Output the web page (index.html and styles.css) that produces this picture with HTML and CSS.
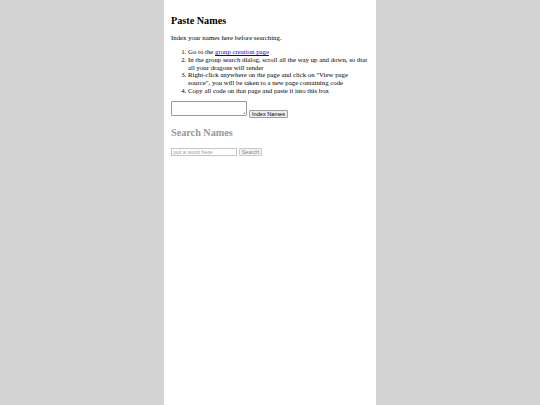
FILE: index.html
```html
<!DOCTYPE html>
<html>
<head>
<meta charset="utf-8">
<title>Paste Names</title>
<link rel="stylesheet" href="styles.css">
</head>
<body>
<div class="page">
  <h2 class="title">Paste Names</h2>
  <p class="intro">Index your names here before searching.</p>
  <ol class="steps">
    <li>Go to the <a href="#" class="link">group creation page</a></li>
    <li>In the group search dialog, scroll all the way up and down, so that all your dragons will render</li>
    <li>Right-click anywhere on the page and click on "View page source", you will be taken to a new page containing code</li>
    <li>Copy all code on that page and paste it into this box</li>
  </ol>
  <div class="index-form">
    <div class="codebox"></div>
    <button class="btn btn-index">Index Names</button>
  </div>
  <h2 class="title title-muted">Search Names</h2>
  <div class="search-form">
    <div class="word-input">put a word here</div>
    <button class="btn btn-search">Search</button>
  </div>
</div>
</body>
</html>
```

FILE: styles.css
```css
html, body {
  margin: 0;
  padding: 0;
  background: #d3d3d3;
}
.page {
  box-sizing: border-box;
  width: 212px;
  min-height: 405px;
  margin: 0 auto;
  padding: 15px 7px 0;
  background: #ffffff;
  font-family: "Liberation Serif", "Times New Roman", serif;
  font-size: 6.8px;
  color: #000;
}
.title {
  margin: 0;
  font-size: 10.2px;
  font-weight: bold;
  line-height: 11.7px;
}
.title-muted {
  color: #999999;
  margin-top: 8.5px;
}
.intro {
  margin: 6.8px 0;
  line-height: 7.8px;
}
.steps {
  margin: 6.8px 0;
  padding-left: 17px;
  line-height: 7.8px;
}
.link {
  color: #0000ee;
  text-decoration: underline;
}
.index-form {
  display: flex;
  align-items: flex-start;
  gap: 2px;
}
.codebox {
  box-sizing: border-box;
  width: 76px;
  height: 15px;
  margin-top: -0.5px;
  border: 1px solid #9a9a9a;
  border-radius: 1px;
  background:
    linear-gradient(135deg, transparent 0 70%, #b5b5b5 70% 76%, transparent 76% 84%, #b5b5b5 84% 90%, transparent 90%) right 1px bottom 1px / 4px 4px no-repeat,
    #ffffff;
}
.btn {
  box-sizing: border-box;
  height: 8px;
  margin: 0;
  padding: 0;
  border: 1px solid #9d9d9d;
  border-radius: 1px;
  background: #efefef;
  font-family: "Liberation Sans", Arial, sans-serif;
  font-size: 5.6px;
  line-height: 6px;
  white-space: nowrap;
  text-align: center;
  color: #000;
}
.btn-index {
  margin-top: 8.5px;
  width: 39px;
}
.search-form {
  display: flex;
  align-items: flex-start;
  gap: 2px;
  margin-top: 9.5px;
}
.word-input {
  box-sizing: border-box;
  width: 66px;
  height: 8px;
  padding: 0 1.5px;
  border: 1px solid #c4c4c4;
  background: #fff;
  font-family: "Liberation Sans", Arial, sans-serif;
  font-size: 5.6px;
  line-height: 6px;
  white-space: nowrap;
  color: #9a9a9a;
}
.btn-search {
  width: 23px;
  color: #8a8a8a;
  border-color: #c8c8c8;
  background: #f3f3f3;
}
```
